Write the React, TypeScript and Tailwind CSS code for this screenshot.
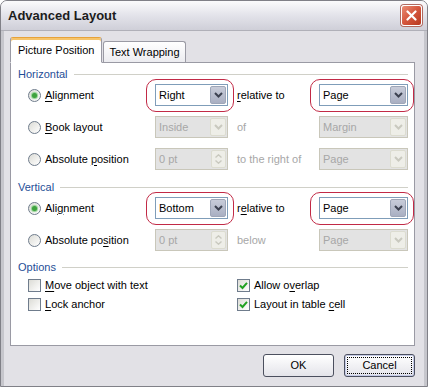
import React from "react";

const font = "font-['Liberation_Sans',Arial,sans-serif]";

function Ul({ children }: { children: React.ReactNode }) {
  return <span className="underline underline-offset-[2px]">{children}</span>;
}

function Radio({ checked }: { checked?: boolean }) {
  return (
    <span className="w-[13px] h-[13px] rounded-full border border-[#6f7c8c] bg-gradient-to-br from-[#dcdcd6] to-white flex items-center justify-center shrink-0">
      {checked && <span className="w-[5px] h-[5px] rounded-full bg-[#3fa23f] shadow-[0_0_1px_1px_#8fd18f]" />}
    </span>
  );
}

function Check({ checked }: { checked?: boolean }) {
  return (
    <span className="w-[13px] h-[13px] border border-[#6f7c8c] bg-gradient-to-br from-[#dcdcd6] to-white flex items-center justify-center shrink-0">
      {checked && (
        <svg width="9" height="9" viewBox="0 0 9 9">
          <path d="M1 4.5 L3.5 7 L8 1.8" fill="none" stroke="#21a121" strokeWidth="2" />
        </svg>
      )}
    </span>
  );
}

function Chevron({ color }: { color: string }) {
  return (
    <svg width="9" height="6" viewBox="0 0 9 6">
      <path d="M1 1 L4.5 4.5 L8 1" fill="none" stroke={color} strokeWidth="2" />
    </svg>
  );
}

function Combo({ value, width, disabled, marked }: { value: string; width: number; disabled?: boolean; marked?: boolean }) {
  return (
    <div className="relative shrink-0" style={{ width }}>
      {marked && (
        <span className="absolute -left-[9px] -right-[6px] -top-[5px] -bottom-[6px] rounded-[10px] border border-[#c22a46] pointer-events-none" />
      )}
      <div
        className={`h-[22px] flex items-center border ${
          disabled ? "border-[#c9c7ba] bg-[#e3e3e3] text-[#a7a7a7]" : "border-[#7f9db9] bg-white text-black"
        }`}
      >
        <span className="flex-1 pl-[3px] truncate">{value}</span>
        <span
          className={`w-[16px] h-[18px] mr-[1px] flex items-center justify-center rounded-[2px] ${
            disabled ? "bg-[#eeeee8] border border-[#dcdcd0]" : "bg-gradient-to-b from-[#c8ccd9] to-[#a9afc2] border border-[#9ea6b8]"
          }`}
        >
          <Chevron color={disabled ? "#c9c9bf" : "#3c4150"} />
        </span>
      </div>
    </div>
  );
}

function Spinner({ value }: { value: string }) {
  return (
    <div className="w-[73px] h-[22px] flex items-center border border-[#c9c7ba] bg-[#e3e3e3] text-[#a7a7a7] shrink-0">
      <span className="flex-1 pl-[3px]">{value}</span>
      <span className="w-[15px] h-[18px] mr-[1px] flex flex-col bg-[#eeeee8] border border-[#dcdcd0] rounded-[2px] items-center justify-center gap-[2px]">
        <svg width="7" height="4" viewBox="0 0 7 4"><path d="M0.5 3.5 L3.5 0.8 L6.5 3.5" fill="none" stroke="#c9c9bf" strokeWidth="1.4" /></svg>
        <svg width="7" height="4" viewBox="0 0 7 4"><path d="M0.5 0.5 L3.5 3.2 L6.5 0.5" fill="none" stroke="#c9c9bf" strokeWidth="1.4" /></svg>
      </span>
    </div>
  );
}

function GroupLabel({ text }: { text: string }) {
  return (
    <div className="flex items-center h-[14px] pr-[6px]">
      <span className="text-[#1f4e97]">{text}</span>
      <span className="flex-1 h-px bg-[#d0d0c8] ml-[6px]" />
    </div>
  );
}

function Row({ children }: { children: React.ReactNode }) {
  return <div className="flex items-center h-[22px] pl-[10px]">{children}</div>;
}

export default function App() {
  return (
    <div className={`${font} text-[11px] leading-none w-[428px] h-[387px] bg-[#e2e1e6] border border-[#808087] rounded-t-[7px] flex flex-col overflow-hidden text-black`}>
      {/* Title bar */}
      <div className="h-[30px] shrink-0 flex items-center pl-[7px] pr-[5px] bg-gradient-to-b from-[#fbfbfc] via-[#e3e3ea] to-[#cfcfd8] border-b border-[#b0b0b8]">
        <span className="font-bold text-[13px] text-[#1c1c1c] flex-1">Advanced Layout</span>
        <span className="w-[21px] h-[21px] rounded-[3px] border border-white bg-gradient-to-br from-[#e88c74] via-[#d4553c] to-[#b8381f] flex items-center justify-center shadow-[0_0_0_1px_#b06a60]">
          <svg width="11" height="11" viewBox="0 0 11 11">
            <path d="M1.5 1.5 L9.5 9.5 M9.5 1.5 L1.5 9.5" stroke="white" strokeWidth="2.2" strokeLinecap="round" />
          </svg>
        </span>
      </div>

      <div className="flex-1 flex flex-col pl-[6px] pr-[9px] border-x-[3px] border-[#c6c6cc]">
        {/* Tabs */}
        <div className="flex items-end h-[31px] pt-[6px]">
          <div className="relative z-10 h-[26px] -mb-px px-[7px] flex items-center bg-white border border-[#9a9aa4] border-b-white rounded-t-[3px] border-t-[#e6a23a] shadow-[inset_0_2px_0_#f6c46a]">
            Picture Position
          </div>
          <div className="h-[21px] ml-[1px] px-[5px] flex items-center bg-gradient-to-b from-white to-[#ececf0] border border-[#9a9aa4] border-b-0 rounded-t-[3px]">
            Text Wrapping
          </div>
        </div>

        {/* Panel */}
        <div className="h-[284px] bg-white border border-[#9a9aa4] pl-[7px] pt-[4px] flex flex-col">
          <GroupLabel text="Horizontal" />
          <div className="mt-[3px] flex flex-col gap-[10px]">
            <Row>
              <Radio checked />
              <span className="ml-[4px] w-[110px]"><Ul>A</Ul>lignment</span>
              <Combo value="Right" width={73} marked />
              <span className="ml-[9px] w-[82px]"><Ul>r</Ul>elative to</span>
              <Combo value="Page" width={89} marked />
            </Row>
            <Row>
              <Radio />
              <span className="ml-[4px] w-[110px]"><Ul>B</Ul>ook layout</span>
              <Combo value="Inside" width={73} disabled />
              <span className="ml-[9px] w-[82px] text-[#a7a7a7]">of</span>
              <Combo value="Margin" width={89} disabled />
            </Row>
            <Row>
              <Radio />
              <span className="ml-[4px] w-[110px]">Absolute <Ul>p</Ul>osition</span>
              <Spinner value="0 pt" />
              <span className="ml-[9px] w-[82px] text-[#a7a7a7]">to the right of</span>
              <Combo value="Page" width={89} disabled />
            </Row>
          </div>

          <div className="mt-[10px]">
            <GroupLabel text="Vertical" />
          </div>
          <div className="mt-[3px] flex flex-col gap-[10px]">
            <Row>
              <Radio checked />
              <span className="ml-[4px] w-[110px]">Ali<Ul>g</Ul>nment</span>
              <Combo value="Bottom" width={73} marked />
              <span className="ml-[9px] w-[82px]">r<Ul>e</Ul>lative to</span>
              <Combo value="Page" width={89} marked />
            </Row>
            <Row>
              <Radio />
              <span className="ml-[4px] w-[110px]">Absolute po<Ul>s</Ul>ition</span>
              <Spinner value="0 pt" />
              <span className="ml-[9px] w-[82px] text-[#a7a7a7]">below</span>
              <Combo value="Page" width={89} disabled />
            </Row>
          </div>

          <div className="mt-[9px]">
            <GroupLabel text="Options" />
          </div>
          <div className="mt-[5px] grid grid-cols-[209px_1fr] gap-y-[6px] pl-[10px]">
            <div className="flex items-center h-[13px]">
              <Check />
              <span className="ml-[4px]"><Ul>M</Ul>ove object with text</span>
            </div>
            <div className="flex items-center h-[13px]">
              <Check checked />
              <span className="ml-[4px]">Allow o<Ul>v</Ul>erlap</span>
            </div>
            <div className="flex items-center h-[13px]">
              <Check />
              <span className="ml-[4px]"><Ul>L</Ul>ock anchor</span>
            </div>
            <div className="flex items-center h-[13px]">
              <Check checked />
              <span className="ml-[4px]">Layout in table <Ul>c</Ul>ell</span>
            </div>
          </div>
        </div>

        {/* Buttons */}
        <div className="flex justify-end gap-[10px] mt-[8px]">
          <button className="w-[71px] h-[23px] rounded-[3px] border border-[#4b4f5e] bg-gradient-to-b from-white to-[#e4e4ea] text-[11px]">
            OK
          </button>
          <button className="w-[71px] h-[23px] rounded-[3px] border border-[#4b4f5e] bg-gradient-to-b from-white to-[#e4e4ea] text-[11px] p-[2px] shadow-[inset_0_0_0_1px_#c5cbe8]">
            <span className="w-full h-full flex items-center justify-center border border-dotted border-black">Cancel</span>
          </button>
        </div>
      </div>
    </div>
  );
}
